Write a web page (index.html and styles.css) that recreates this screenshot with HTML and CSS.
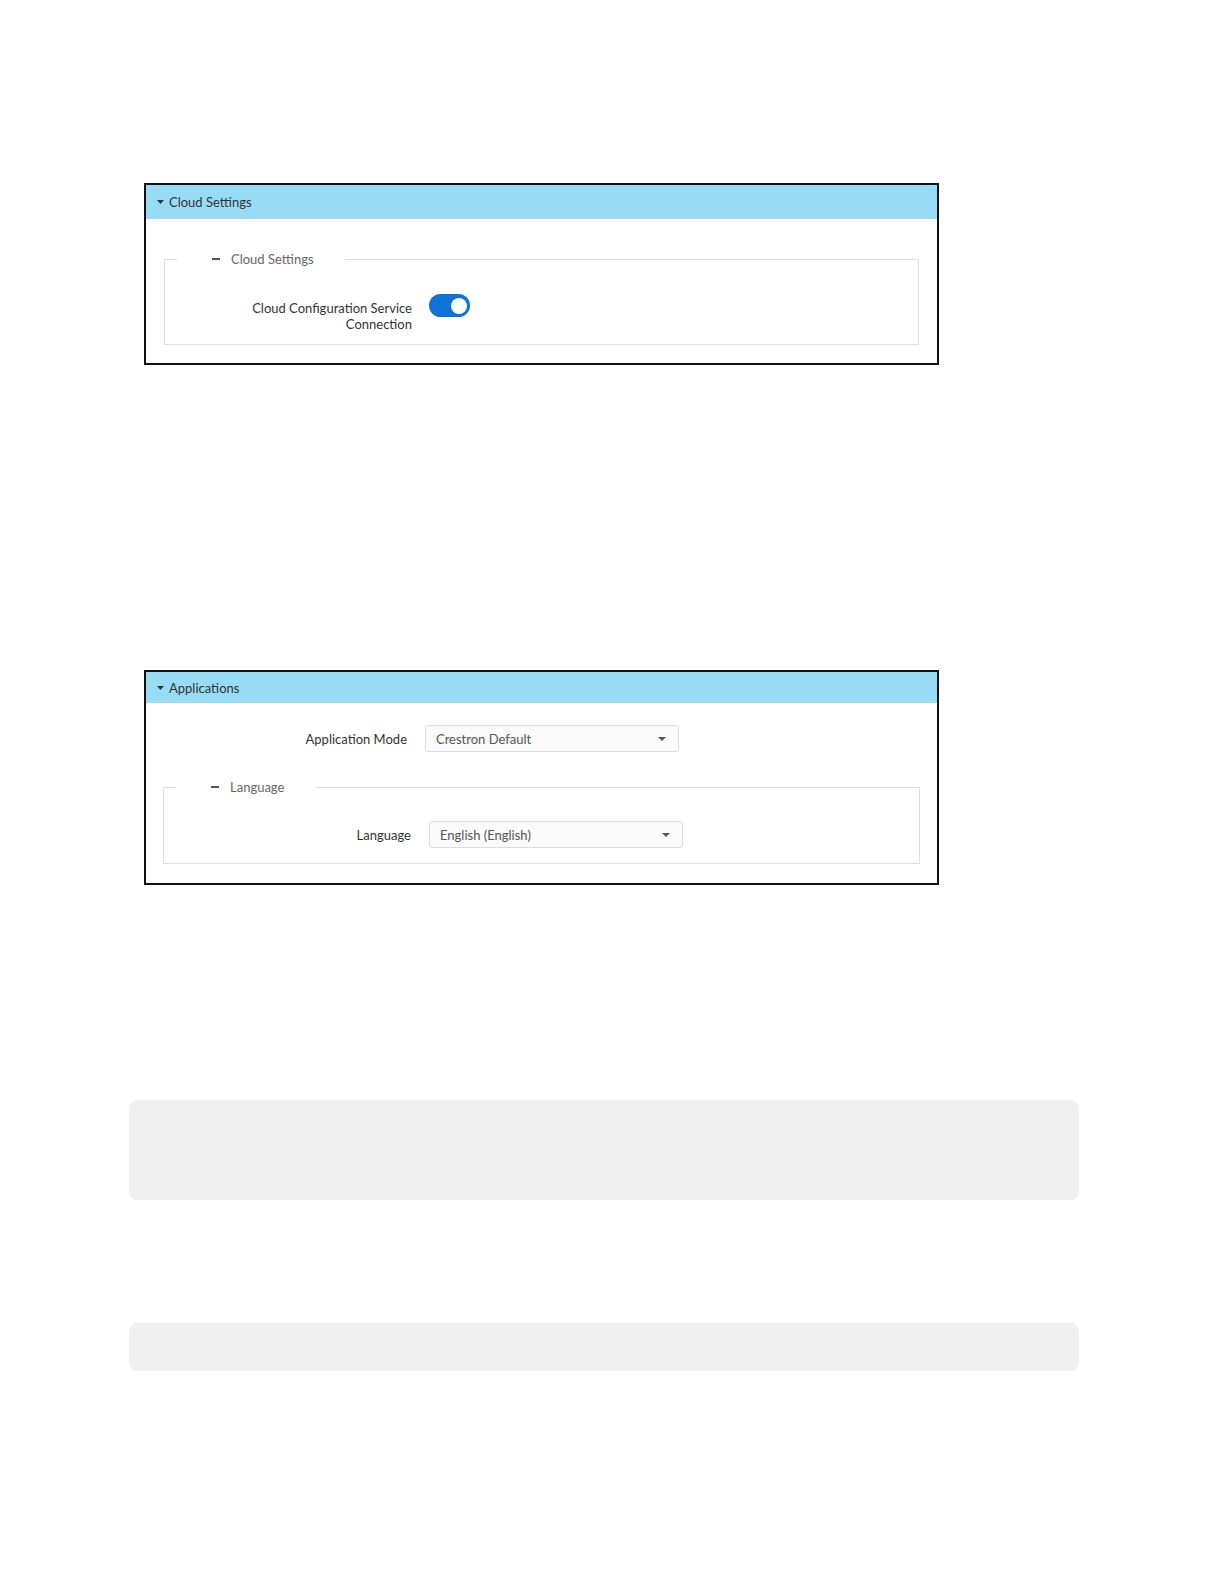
FILE: index.html
```html
<!DOCTYPE html>
<html lang="en">
<head>
  <meta charset="UTF-8" />
  <meta name="viewport" content="width=device-width, initial-scale=1" />
  <title>Device Settings</title>
  <link rel="stylesheet" href="styles.css">
</head>
<body>

  <div class="page">

    <!-- Cloud settings -->
    <section class="panel panel-cloud">
      <div class="panel-header">
        <svg class="caret" width="7" height="4" viewBox="0 0 7 4"><path d="M0 0h7L3.5 4z" fill="#333"/></svg>
        <span>Cloud Settings</span>
      </div>
      <fieldset class="group">
        <legend><span class="dash"></span>Cloud Settings</legend>
        <div class="row row-toggle">
          <label class="row-label">Cloud Configuration Service<br>Connection</label>
          <span class="toggle on"><span class="knob"></span></span>
        </div>
      </fieldset>
    </section>

    <!-- Applications -->
    <section class="panel panel-apps">
      <div class="panel-header header-sm">
        <svg class="caret" width="7" height="4" viewBox="0 0 7 4"><path d="M0 0h7L3.5 4z" fill="#333"/></svg>
        <span>Applications</span>
      </div>
      <div class="row row-top">
        <label class="row-label">Application Mode</label>
        <div class="select">
          <span>Crestron Default</span>
          <svg width="8" height="4" viewBox="0 0 8 4"><path d="M0 0h8L4 4z" fill="#555"/></svg>
        </div>
      </div>
      <fieldset class="group group-lang">
        <legend><span class="dash"></span>Language</legend>
        <div class="row">
          <label class="row-label">Language</label>
          <div class="select">
            <span>English (English)</span>
            <svg width="8" height="4" viewBox="0 0 8 4"><path d="M0 0h8L4 4z" fill="#555"/></svg>
          </div>
        </div>
      </fieldset>
    </section>

    <div class="note note-tall"></div>
    <div class="note note-short"></div>

  </div>

</body>
</html>
```

FILE: styles.css
```css
* {
  box-sizing: border-box;
}
body {
  margin: 0;
  background: #fff;
  font-family: Lato, "Open Sans", Arial, sans-serif;
  font-size: 13px;
  color: #333;
}
.page {
  padding: 183px 0 0 129px;
}
.panel {
  width: 795px;
  margin-left: 15px;
  border: 2px solid #111;
  background: #fff;
}
.panel-cloud {
  margin-bottom: 305px;
}
.panel-apps {
  margin-bottom: 215px;
}
.panel-header {
  display: flex;
  align-items: center;
  gap: 5px;
  height: 34px;
  padding-left: 11px;
  background: #97dcf4;
  color: #333;
  line-height: 16px;
}
.panel-header.header-sm {
  height: 31px;
}
.caret {
  display: block;
}

/* grouped fields */
.group {
  margin: 32px 18px 18px;
  padding: 0;
  border: 1px solid #dedede;
  min-width: 0;
}
.group legend {
  display: flex;
  align-items: center;
  margin-left: 12px;
  padding: 0 31px 0 35px;
  line-height: 16px;
  color: #666;
}
.group .dash {
  display: inline-block;
  width: 8px;
  height: 2px;
  margin-right: 11px;
  background: #555;
}
.group-lang {
  margin: 27px 17px 19px 17px;
}

/* label + control rows */
.row {
  display: flex;
  align-items: center;
  gap: 18px;
  padding: 26px 0 15px 17px;
}
.row-label {
  width: 230px;
  text-align: right;
  line-height: 16px;
  color: #333;
}
.row-top {
  padding: 22px 0 0 31px;
}
.row-toggle {
  align-items: flex-start;
  gap: 17px;
  padding-top: 27px;
  padding-bottom: 12px;
}
.row-toggle .row-label {
  padding-top: 6px;
}

.toggle {
  display: flex;
  align-items: center;
  width: 41px;
  height: 23px;
  padding: 0 3px;
  border-radius: 12px;
  background: #cfcfcf;
}
.toggle.on {
  justify-content: flex-end;
  background: #0e72d6;
}
.toggle .knob {
  width: 16px;
  height: 16px;
  border-radius: 50%;
  background: #fff;
}

.select {
  display: flex;
  align-items: center;
  justify-content: space-between;
  width: 254px;
  height: 27px;
  padding: 0 12px 0 10px;
  border: 1px solid #dcdcdc;
  border-radius: 3px;
  background: #fafafa;
  color: #555;
}

/* empty grey blocks */
.note {
  width: 950px;
  background: #f0f0f0;
  border-radius: 8px;
}
.note-tall {
  height: 100px;
  margin-bottom: 123px;
}
.note-short {
  height: 48px;
}
```
